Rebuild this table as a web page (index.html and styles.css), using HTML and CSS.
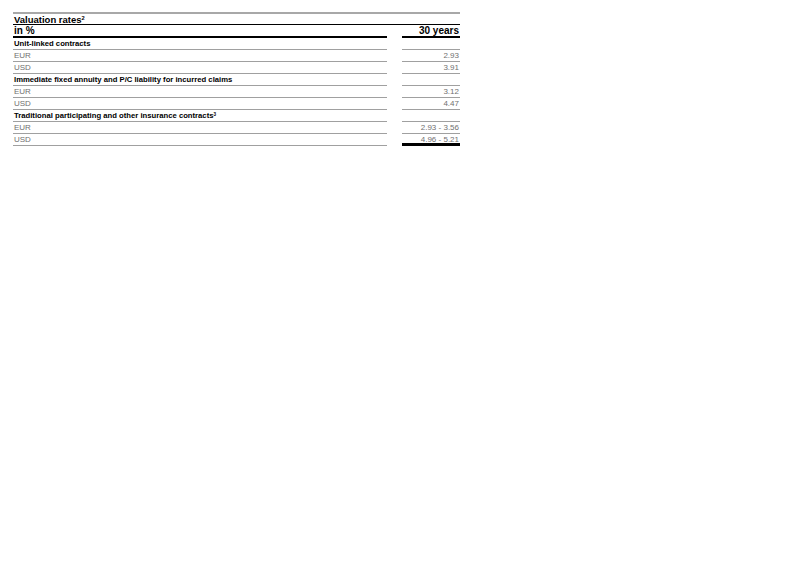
FILE: index.html
```html
<!DOCTYPE html>
<html>
<head>
<meta charset="utf-8">
<link rel="stylesheet" href="styles.css">
</head>
<body>
<div class="table">
  <div class="title">Valuation rates<sup>2</sup></div>
  <div class="head left">in %</div>
  <div class="head right">30 years</div>

  <div class="group left">Unit-linked contracts</div>
  <div class="group right"></div>
  <div class="cell left">EUR</div>
  <div class="cell right">2.93</div>
  <div class="cell left">USD</div>
  <div class="cell right">3.91</div>

  <div class="group left">Immediate fixed annuity and P/C liability for incurred claims</div>
  <div class="group right"></div>
  <div class="cell left">EUR</div>
  <div class="cell right">3.12</div>
  <div class="cell left">USD</div>
  <div class="cell right">4.47</div>

  <div class="group left">Traditional participating and other insurance contracts<sup>3</sup></div>
  <div class="group right"></div>
  <div class="cell left">EUR</div>
  <div class="cell right">2.93 - 3.56</div>
  <div class="cell left last">USD</div>
  <div class="cell right last">4.96 - 5.21</div>
</div>
</body>
</html>
```

FILE: styles.css
```css
html, body {
  margin: 0;
  padding: 0;
  background: #ffffff;
}

body {
  font-family: "Liberation Sans", Arial, sans-serif;
  color: #000;
}

.table {
  margin: 12px 0 0 13px;
  width: 447px;
  display: grid;
  grid-template-columns: 374px 58px;
  column-gap: 15px;
}

.title {
  grid-column: 1 / span 2;
  border-top: 2px solid #a8a8a8;
  border-bottom: 1px solid #000;
  height: 10px;
  line-height: 11px;
  font-size: 9.5px;
  font-weight: bold;
  padding-left: 1px;
}

sup {
  font-size: 0.6em;
  line-height: 0;
  vertical-align: 0.45em;
}

.head {
  height: 11px;
  line-height: 11px;
  font-size: 10px;
  font-weight: bold;
  border-bottom: 2px solid #000;
}

.left {
  padding-left: 1px;
}

.right {
  text-align: right;
  padding-right: 1px;
}

.group {
  height: 11px;
  line-height: 11px;
  font-size: 7.7px;
  font-weight: bold;
  border-bottom: 1px solid #a0a0a0;
}

.cell {
  height: 11px;
  line-height: 11px;
  font-size: 8px;
  color: #707070;
  border-bottom: 1px solid #a0a0a0;
}

.right.last {
  border-bottom: 3px solid #000;
  height: 9px;
}
```
